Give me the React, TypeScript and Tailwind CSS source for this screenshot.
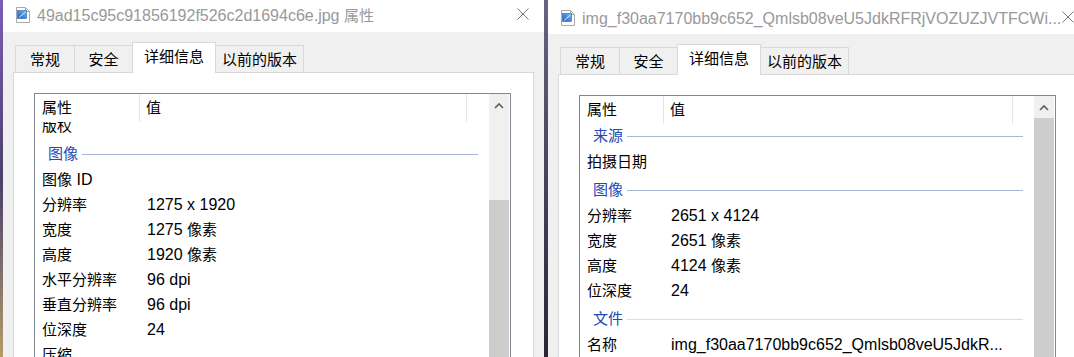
import React, { useId } from 'react';

type Row =
  | { kind: 'group'; label: string; faint?: boolean }
  | { kind: 'item'; label: string; value?: string };

const leftRows: Row[] = [
  { kind: 'item', label: '版权' },
  { kind: 'group', label: '图像' },
  { kind: 'item', label: '图像 ID' },
  { kind: 'item', label: '分辨率', value: '1275 x 1920' },
  { kind: 'item', label: '宽度', value: '1275 像素' },
  { kind: 'item', label: '高度', value: '1920 像素' },
  { kind: 'item', label: '水平分辨率', value: '96 dpi' },
  { kind: 'item', label: '垂直分辨率', value: '96 dpi' },
  { kind: 'item', label: '位深度', value: '24' },
  { kind: 'item', label: '压缩' },
  { kind: 'item', label: '分辨率单位' },
];

const rightRows: Row[] = [
  { kind: 'group', label: '来源' },
  { kind: 'item', label: '拍摄日期' },
  { kind: 'group', label: '图像' },
  { kind: 'item', label: '分辨率', value: '2651 x 4124' },
  { kind: 'item', label: '宽度', value: '2651 像素' },
  { kind: 'item', label: '高度', value: '4124 像素' },
  { kind: 'item', label: '位深度', value: '24' },
  { kind: 'group', label: '文件', faint: true },
  { kind: 'item', label: '名称', value: 'img_f30aa7170bb9c652_Qmlsb08veU5JdkR...' },
  { kind: 'item', label: '项目类型', value: 'JPG 文件' },
];

// chinese runs are a little smaller than the latin ones
function Txt({ s }: { s: string }) {
  const parts = s.split(/([\u3400-\u9fff]+)/);
  return (
    <>
      {parts.map((p, i) =>
        /[\u3400-\u9fff]/.test(p) ? (
          <span key={i} className="text-[15px]">{p}</span>
        ) : (
          <React.Fragment key={i}>{p}</React.Fragment>
        )
      )}
    </>
  );
}

function FileIcon() {
  const id = useId();
  return (
    <svg width="14" height="16" viewBox="0 0 14 16" className="flex-none">
      <defs>
        <linearGradient id={id} x1="0" y1="1" x2="1" y2="0">
          <stop offset="0" stopColor="#1658c4" />
          <stop offset="1" stopColor="#6fc3f6" />
        </linearGradient>
      </defs>
      <path d="M0.5 0.5H9.5L13.5 4.5V15.5H0.5Z" fill="#fff" stroke="#a8a8a8" />
      <path d="M9.5 0.5V4.5H13.5" fill="none" stroke="#a8a8a8" />
      <rect x="1.5" y="3.5" width="9" height="8" fill={`url(#${id})`} stroke="#2a63b8" strokeWidth="0.6" />
      <path d="M3 10.5L9.5 5" stroke="#d4ecff" strokeWidth="1" />
    </svg>
  );
}

function CloseX() {
  return (
    <svg width="12" height="12" viewBox="0 0 12 12" className="flex-none">
      <path d="M0.5 0.5L11.5 11.5M11.5 0.5L0.5 11.5" stroke="#7a7a7a" strokeWidth="1" />
    </svg>
  );
}

interface DialogProps {
  title: string;
  rows: Row[];
  right?: boolean;
}

function Dialog({ title, rows, right }: DialogProps) {
  const tabs = [
    { label: '常规', w: 'w-[60px]' },
    { label: '安全', w: 'w-[59px]' },
    { label: '详细信息', w: 'w-[84px]', active: true },
    { label: '以前的版本', w: 'w-[89px]' },
  ];
  const col1 = right ? 'w-[84px]' : 'w-[105px]';
  const col2 = right ? 'w-[349px]' : 'w-[327px]';

  return (
    <div className="flex-none w-[541px] h-full flex flex-col bg-[#f0f0f0]">
      {/* Title bar */}
      <div
        className={`flex-none flex items-start bg-white pl-[13px] pr-[15px] ${
          right ? 'h-[34px] pt-[10px]' : 'h-[32px] pt-[7px]'
        }`}
      >
        <FileIcon />
        <div className="flex-1 ml-[7px] -mt-[3px] text-[16px] text-[#999999] whitespace-nowrap overflow-hidden">
          <Txt s={title} />
        </div>
        <div className="mt-[1px]">
          <CloseX />
        </div>
      </div>

      {/* Tabs + panel */}
      <div className="flex-1 flex flex-col pt-[10px] px-[10px]">
        <div className="flex-none flex items-end pl-[2px] h-[30px]">
          {tabs.map((t, i) => (
            <div
              key={t.label}
              className={`${t.w} ${i > 0 ? '-ml-px' : ''} flex items-center justify-center border-t border-l border-r border-[#d9d9d9] text-black ${
                t.active
                  ? 'relative z-10 h-[31px] -mb-px bg-white pb-[2px]'
                  : 'h-[27px] bg-[#f0f0f0] pt-[2px]'
              }`}
            >
              <span className="text-[15px]">{t.label}</span>
            </div>
          ))}
        </div>

        <div className="flex-1 border border-[#d9d9d9] bg-white pt-[20px] pl-[20px]">
          {/* List view */}
          <div className="w-[477px] h-[300px] border border-[#828790] flex bg-white">
            <div className="flex-1 flex flex-col overflow-hidden">
              <div className="flex-none h-[28px] flex text-black">
                <div className={`${col1} h-full border-r border-[#e5e5e5] pl-[7px] flex items-center`}>
                  <span className="text-[15px]">属性</span>
                </div>
                <div className={`${col2} h-full border-r border-[#e5e5e5] pl-[6px] flex items-center`}>
                  <span className="text-[15px]">值</span>
                </div>
              </div>
              <div className="flex-1 overflow-hidden">
                <div className={right ? '-mt-[4px]' : '-mt-[9px]'}>
                  {rows.map((r, i) =>
                    r.kind === 'group' ? (
                      <div key={i} className="h-[29px] pt-[3px] flex items-center gap-[4px] pl-[13px] pr-[11px]">
                        <span className="text-[15px] text-[#2349b4]">{r.label}</span>
                        <div className={`flex-1 h-px ${r.faint ? 'bg-[#d6ddee]' : 'bg-[#a9b7d8]'}`} />
                      </div>
                    ) : (
                      <div key={i} className="h-[25px] flex items-center text-black whitespace-nowrap">
                        <div className={`${col1} flex-none pl-[7px]`}>
                          <Txt s={r.label} />
                        </div>
                        <div className="flex-none pl-[7px]">{r.value ? <Txt s={r.value} /> : null}</div>
                      </div>
                    )
                  )}
                </div>
              </div>
            </div>

            {/* Scrollbar */}
            <div className="flex-none w-[20px] mr-px flex flex-col bg-[#f0f0f0]">
              <div className="h-[22px] flex items-center justify-center">
                <svg width="10" height="7" viewBox="0 0 10 7">
                  <polyline points="1,6 5,2 9,6" fill="none" stroke="#606060" strokeWidth="1.7" />
                </svg>
              </div>
              {!right && <div className="h-[84px]" />}
              <div className="flex-1 bg-[#cdcdcd]" />
            </div>
          </div>
        </div>
      </div>
    </div>
  );
}

export default function App() {
  return (
    <div className="w-[1074px] h-[357px] overflow-hidden flex bg-[#f0f0f0] font-['Liberation_Sans','Noto_Sans_CJK_SC',sans-serif] text-[16px] leading-normal">
      <div className="flex-none w-[3px] h-full bg-linear-to-b from-[#7b5fb5] via-[#4b3f6a] to-[#b59b63]" />
      <Dialog title="49ad15c95c91856192f526c2d1694c6e.jpg 属性" rows={leftRows} />
      <div className="flex-none w-[4px] h-full bg-linear-to-b from-[#6a6282] to-[#2c2436]" />
      <Dialog title="img_f30aa7170bb9c652_Qmlsb08veU5JdkRFRjVOZUZJVTFCWi..." rows={rightRows} right />
    </div>
  );
}
